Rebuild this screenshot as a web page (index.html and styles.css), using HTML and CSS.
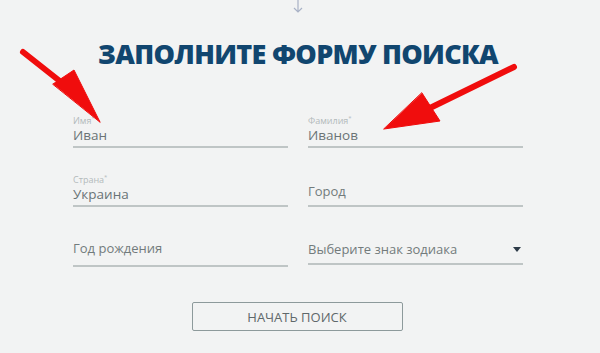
FILE: index.html
```html
<!DOCTYPE html>
<html lang="ru">
<head>
<meta charset="utf-8">
<title>Форма поиска</title>
<link rel="stylesheet" href="styles.css">
</head>
<body>
<div class="page">
  <div class="scroll-hint">
    <svg width="12" height="14" viewBox="0 0 12 14"><path d="M6 0 V12 M2 8 L6 12 L10 8" fill="none" stroke="#a9b2c6" stroke-width="1.2"/></svg>
  </div>
  <h1 class="title">ЗАПОЛНИТЕ ФОРМУ ПОИСКА</h1>
  <form class="form">
    <div class="field"><span class="label">Имя<sup>*</sup></span><span class="value">Иван</span></div>
    <div class="field"><span class="label">Фамилия<sup>*</sup></span><span class="value">Иванов</span></div>
    <div class="field"><span class="label">Страна<sup>*</sup></span><span class="value">Украина</span></div>
    <div class="field"><span class="value placeholder">Город</span></div>
    <div class="field field-low"><span class="value placeholder">Год рождения</span></div>
    <div class="field field-select"><span class="value placeholder">Выберите знак зодиака</span><span class="caret"></span></div>
  </form>
  <div class="actions"><button type="button" class="btn">НАЧАТЬ ПОИСК</button></div>
</div>
<svg class="arrows" width="600" height="353" viewBox="0 0 600 353">
  <g fill="#f00d0d" stroke="#f00d0d" stroke-linecap="round">
    <line x1="23" y1="52" x2="66" y2="86" stroke-width="6"/>
    <polygon points="53,84 74,70 100,122" stroke-width="1" stroke-linejoin="round"/>
    <line x1="514" y1="67" x2="430" y2="108" stroke-width="6"/>
    <polygon points="422,93 440,121 384,129" stroke-width="1" stroke-linejoin="round"/>
  </g>
</svg>
</body>
</html>
```
FILE: styles.css
```css
html, body {
  margin: 0;
  padding: 0;
  background: #f2f3f3;
}
body {
  width: 600px;
  height: 353px;
  overflow: hidden;
  position: relative;
  font-family: "Open Sans", "Liberation Sans", sans-serif;
}
.page {
  width: 450px;
  margin-left: 73px;
}
.scroll-hint {
  height: 14px;
  display: flex;
  justify-content: center;
}
.title {
  margin: 22px 0 0;
  height: 36px;
  line-height: 36px;
  text-align: center;
  font-family: "Open Sans", sans-serif;
  font-weight: 800;
  font-size: 27px;
  letter-spacing: -0.7px;
  color: #11466f;
}
.form {
  margin-top: 43px;
  display: grid;
  grid-template-columns: 215px 215px;
  column-gap: 20px;
  row-gap: 26px;
  align-items: start;
}
.field {
  height: 31px;
  display: flex;
  flex-direction: column;
  justify-content: flex-end;
  border-bottom: 2px solid #bfc5c5;
  position: relative;
}
.label {
  font-size: 9px;
  line-height: 11px;
  color: #b3babb;
}
.label sup {
  font-size: 6px;
  vertical-align: top;
  line-height: 6px;
}
.value {
  font-size: 13.5px;
  line-height: 18px;
  padding-bottom: 2px;
  color: #6a7476;
}
.placeholder {
  padding-bottom: 5px;
  font-size: 13px;
  color: #727b7c;
}
.field-low {
  height: 32px;
}
.field-low .placeholder {
  padding-bottom: 8px;
}
.field-select {
  height: 30px;
}
.caret {
  position: absolute;
  right: 2px;
  bottom: 11px;
  width: 0;
  height: 0;
  border-left: 4px solid transparent;
  border-right: 4px solid transparent;
  border-top: 5px solid #2d3b48;
}
.actions {
  display: flex;
  justify-content: center;
  margin-top: 35px;
  padding-right: 2px;
}
.btn {
  width: 211px;
  height: 29px;
  background: #f2f3f3;
  border: 1.5px solid #8d9a9b;
  border-radius: 2px;
  font-family: "Open Sans", sans-serif;
  font-size: 13px;
  color: #5f686a;
  letter-spacing: 0;
  padding: 0;
}
.arrows {
  position: absolute;
  left: 0;
  top: 0;
  pointer-events: none;
}
```
